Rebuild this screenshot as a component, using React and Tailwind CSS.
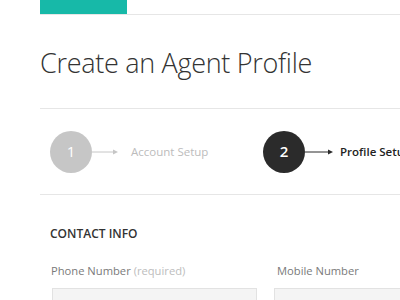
import React from "react";

function Arrow({ color, width }) {
  return (
    <svg width={width} height="8" viewBox={`0 0 ${width} 8`} className="shrink-0">
      <line x1="0" y1="4" x2={width - 3} y2="4" stroke={color} strokeWidth="1" />
      <polygon points={`${width - 5},1.5 ${width},4 ${width - 5},6.5`} fill={color} />
    </svg>
  );
}

function Step({ number, label, active }) {
  return (
    <div className="flex items-center">
      <div
        className={`w-[42px] h-[42px] rounded-full flex items-center justify-center text-[15px] ${
          active ? "bg-[#2b2b2b] text-white font-semibold" : "bg-[#c6c6c6] text-white"
        }`}
      >
        {number}
      </div>
      {active ? <Arrow color="#2b2b2b" width={28} /> : <Arrow color="#c6c6c6" width={26} />}
      <span
        className={`whitespace-nowrap text-[11.5px] ${
          active ? "ml-[7px] text-[#222] font-semibold" : "ml-[13px] text-[#bcbcbc]"
        }`}
      >
        {label}
      </span>
    </div>
  );
}

export default function App() {
  return (
    <div className="w-[400px] h-[300px] overflow-hidden bg-white font-['Open_Sans',sans-serif]">
      <div className="ml-10">
        <div className="border-b border-[#e6e6e6]">
          <div className="w-[87px] h-[14px] bg-[#17b9a8]" />
        </div>

        <h1 className="pt-[27px] pb-[25px] text-[27px] leading-[41px] tracking-[-0.3px] font-light text-[#333] whitespace-nowrap border-b border-[#e6e6e6]">
          Create an Agent Profile
        </h1>

        <div className="h-[86px] flex items-center pl-[10px] border-b border-[#e6e6e6]">
          <div className="w-[213px] shrink-0">
            <Step number="1" label="Account Setup" />
          </div>
          <Step number="2" label="Profile Setup" active />
        </div>

        <div className="pl-[10px] pt-[31px]">
          <h2 className="text-[12px] leading-[16px] font-semibold text-[#333] uppercase">
            Contact Info
          </h2>
          <div className="mt-[21px] flex gap-[18px] whitespace-nowrap">
            <div className="w-[206px] shrink-0 pl-[1px]">
              <label className="block text-[11.2px] leading-[16px] text-[#7a7a7a]">
                Phone Number <span className="text-[#bdbdbd]">(required)</span>
              </label>
              <div className="mt-[9px] ml-[1px] w-[205px] h-[36px] bg-[#f4f4f4] border border-[#e2e2e2]" />
            </div>
            <div className="w-[206px] shrink-0">
              <label className="block pl-[3px] text-[11.2px] leading-[16px] text-[#7a7a7a]">
                Mobile Number
              </label>
              <div className="mt-[9px] w-[205px] h-[36px] bg-[#f4f4f4] border border-[#e2e2e2]" />
            </div>
          </div>
        </div>
      </div>
    </div>
  );
}
